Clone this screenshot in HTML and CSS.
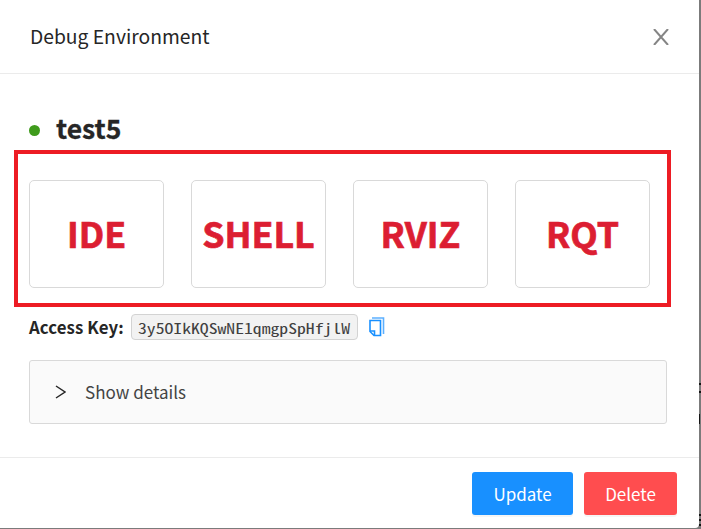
FILE: index.html
```html
<!DOCTYPE html>
<html lang="en">
<head>
<meta charset="utf-8">
<title>Debug Environment</title>
<link rel="stylesheet" href="styles.css">
</head>
<body>
<div class="modal">
  <header class="modal-header">
    <span class="title">Debug Environment</span>
    <svg class="close" width="16" height="16" viewBox="0 0 16 16"><path d="M1 0L15 16M15 0L1 16"/></svg>
  </header>
  <main class="modal-body">
    <h1 class="name"><span class="dot"></span><span class="name-text">test5</span></h1>
    <div class="tools">
      <div class="tool"><span>IDE</span></div>
      <div class="tool"><span>SHELL</span></div>
      <div class="tool"><span>RVIZ</span></div>
      <div class="tool"><span>RQT</span></div>
    </div>
    <div class="key-row">
      <span class="key-label">Access Key:</span>
      <code class="key"><span class="key-text">3y5OIkKQSwNE1qmgpSpHfjlW</span></code>
      <svg class="copy" width="16" height="20" viewBox="0 0 16 20"><path class="back" d="M3 1H14.5V17"/><path d="M1 3.5H11.5V18.5H5L1 14.5Z"/><path d="M1 14H5.5V18.5"/></svg>
    </div>
    <div class="details">
      <svg class="arrow" width="11" height="14" viewBox="0 0 11 14"><path d="M1 1L10 7L1 13"/></svg>
      <span class="details-text">Show details</span>
    </div>
  </main>
  <footer class="modal-footer">
    <button class="btn update"><span>Update</span></button>
    <button class="btn delete"><span>Delete</span></button>
  </footer>
</div>
<svg class="behind" width="2" height="529" viewBox="0 0 2 529"><path d="M0 383h2v2h-2zM0 391h2v2h-2zM0 414h1v10h-1zM0 514h2v2h-2zM0 519h2v2h-2zM0 524h2v2h-2z"/></svg>
</body>
</html>
```
FILE: styles.css
```css
* { box-sizing: border-box; }
body {
  margin: 0;
  width: 701px;
  height: 529px;
  overflow: hidden;
  display: flex;
  background: #7b7b7b;
  color: #262626;
  font-family: "Noto Sans CJK SC", "Noto Sans", sans-serif;
}
.modal {
  width: 699px;
  height: 528px;
  background: #fff;
  border-radius: 0 0 4px 0;
  display: flex;
  flex-direction: column;
}
.modal-header {
  height: 74px;
  border-bottom: 1px solid #ebebeb;
  padding: 0 30px 0 30px;
  display: flex;
  align-items: center;
  justify-content: space-between;
}
.title { font-size: 19.3px; line-height: 28px; padding-bottom: 2px; }
.close { stroke: #858585; stroke-width: 2; fill: none; }
.modal-body { height: 383px; padding: 36px 28px 0 14px; }
.name {
  margin: 0;
  height: 40px;
  display: flex;
  align-items: center;
  gap: 16px;
  padding-left: 15px;
  font-size: 26.5px;
  line-height: 40px;
  -webkit-text-stroke: 0.3px #262626;
}
.name-text { padding-bottom: 4px; }
.dot { width: 11px; height: 11px; border-radius: 50%; background: #3f9b1c; }
.tools {
  width: 657px;
  height: 157px;
  border: 4px solid #ed1c24;
  padding: 26px 0 0 11px;
  display: flex;
  gap: 27px;
}
.tool {
  width: 135px;
  height: 108px;
  border: 1px solid #d9d9d9;
  border-radius: 5px;
  display: flex;
  align-items: center;
  justify-content: center;
  padding-bottom: 2px;
  color: #dc1e32;
  font-size: 35.7px;
  font-weight: 700;
  line-height: 50px;
  -webkit-text-stroke: 0.7px #dc1e32;
}
.key-row { display: flex; align-items: center; height: 26px; margin-top: 7px; padding-left: 15px; }
.key-label { font-size: 16.8px; letter-spacing: 0.1px; font-weight: 700; line-height: 26px; width: 102px; white-space: nowrap; }
.key {
  width: 227px;
  height: 26px;
  background: #f2f2f2;
  border: 1px solid #d3d3d3;
  border-radius: 4px;
  padding-left: 6px;
  color: #404040;
  font-family: "Noto Sans Mono CJK SC", "Liberation Mono", monospace;
  font-size: 14.2px;
  line-height: 26px;
}
.key-text { display: inline-block; transform: scaleX(1.245); transform-origin: 0 50%; }
.copy { margin-left: 11px; fill: none; stroke: #1890ff; stroke-width: 1.6; }
.copy .back { stroke: #5cb0ff; }
.details {
  margin: 20px 0 0 15px;
  width: 638px;
  height: 64px;
  background: #fafafa;
  border: 1px solid #d9d9d9;
  border-radius: 3px;
  display: flex;
  align-items: center;
  padding-left: 25px;
}
.arrow { fill: none; stroke: #262626; stroke-width: 1.5; }
.details-text { margin-left: 19px; font-size: 17px; line-height: 26px; color: #444; }
.modal-footer {
  height: 71px;
  border-top: 1px solid #ebebeb;
  padding: 14px 22px 0 0;
  display: flex;
  justify-content: flex-end;
  gap: 11px;
}
.btn {
  height: 43px;
  border: 0;
  border-radius: 3px;
  padding: 0;
  color: #fff;
  font-family: inherit;
  font-size: 17px;
  box-shadow: 0 2px 0 rgba(0, 0, 0, .04);
}
.update { width: 101px; background: #1890ff; }
.delete { width: 93px; background: #ff4d4f; }
.behind { fill: #151515; }
```
